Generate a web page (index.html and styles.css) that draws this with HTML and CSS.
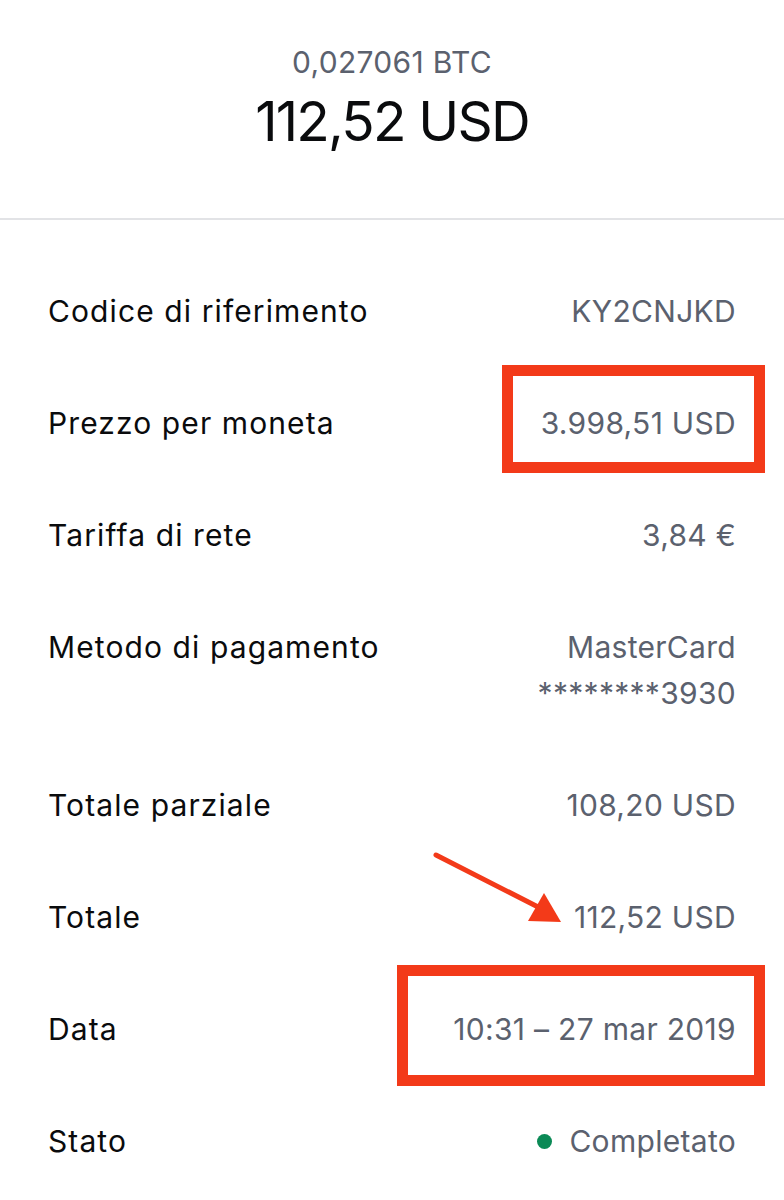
FILE: index.html
```html
<!DOCTYPE html>
<html lang="it">
<head>
  <meta charset="UTF-8">
  <meta name="viewport" content="width=device-width, initial-scale=1" />
  <title>Dettagli transazione</title>
  <link rel="stylesheet" href="styles.css">
</head>
<body>
  <div class="screen">
    <header class="summary">
      <p class="crypto-amount">0,027061 BTC</p>
      <h1 class="fiat-amount">112,52 USD</h1>
    </header>

    <ul class="details">
      <li class="row">
        <span class="label">Codice di riferimento</span>
        <span class="value">KY2CNJKD</span>
      </li>
      <li class="row">
        <span class="label">Prezzo per moneta</span>
        <span class="value">3.998,51 USD</span>
      </li>
      <li class="row">
        <span class="label">Tariffa di rete</span>
        <span class="value">3,84 €</span>
      </li>
      <li class="row">
        <span class="label">Metodo di pagamento</span>
        <span class="value">MasterCard<br>********3930</span>
      </li>
      <li class="row">
        <span class="label">Totale parziale</span>
        <span class="value">108,20 USD</span>
      </li>
      <li class="row">
        <span class="label">Totale</span>
        <span class="value">112,52 USD</span>
      </li>
      <li class="row">
        <span class="label">Data</span>
        <span class="value">10:31 – 27 mar 2019</span>
      </li>
      <li class="row">
        <span class="label">Stato</span>
        <span class="value status"><span class="dot"></span>Completato</span>
      </li>
    </ul>

    <!-- annotations drawn over the screenshot -->
    <div class="mark mark-price"></div>
    <div class="mark mark-date"></div>
    <svg class="arrow" width="140" height="80" viewBox="0 0 140 80">
      <line x1="6" y1="6" x2="112" y2="60" stroke="#f33a19" stroke-width="5" stroke-linecap="round" />
      <polygon points="131,73 98,72 114,44" fill="#f33a19" />
    </svg>
  </div>
</body>
</html>
```

FILE: styles.css
```css
* {
  box-sizing: border-box;
}

body {
  margin: 0;
  background: #fff;
  font-family: "Inter", "Liberation Sans", sans-serif;
  color: #0a0b0d;
}

.screen {
  position: relative;
  width: 784px;
  min-height: 1200px;
  overflow: hidden;
}

.summary {
  text-align: center;
  padding-top: 44px;
  height: 220px;
  border-bottom: 2px solid #e2e3e6;
}

.crypto-amount {
  margin: 0;
  font-size: 30px;
  line-height: 36px;
  letter-spacing: 0.3px;
  color: #5b616e;
}

.fiat-amount {
  margin: 8px 0 0;
  font-size: 55px;
  line-height: 66px;
  font-weight: 400;
  letter-spacing: -1.8px;
}

.details {
  list-style: none;
  margin: 0;
  padding: 35px 48px 0 48px;
}

.row {
  display: flex;
  justify-content: space-between;
  align-items: flex-start;
  padding: 33px 0;
  font-size: 30px;
  line-height: 46px;
}

.label {
  color: #0a0b0d;
  letter-spacing: 1.1px;
}

.value {
  color: #5b616e;
  text-align: right;
  letter-spacing: 0.3px;
}

.status {
  display: flex;
  align-items: center;
  gap: 17px;
}

.dot {
  width: 15px;
  height: 15px;
  border-radius: 50%;
  background: #0b8a56;
}

.mark {
  position: absolute;
  border: 11px solid #f33a19;
}

.mark-price {
  left: 502px;
  top: 365px;
  width: 263px;
  height: 108px;
}

.mark-date {
  left: 397px;
  top: 965px;
  width: 368px;
  height: 121px;
}

.arrow {
  position: absolute;
  left: 430px;
  top: 849px;
}
```
